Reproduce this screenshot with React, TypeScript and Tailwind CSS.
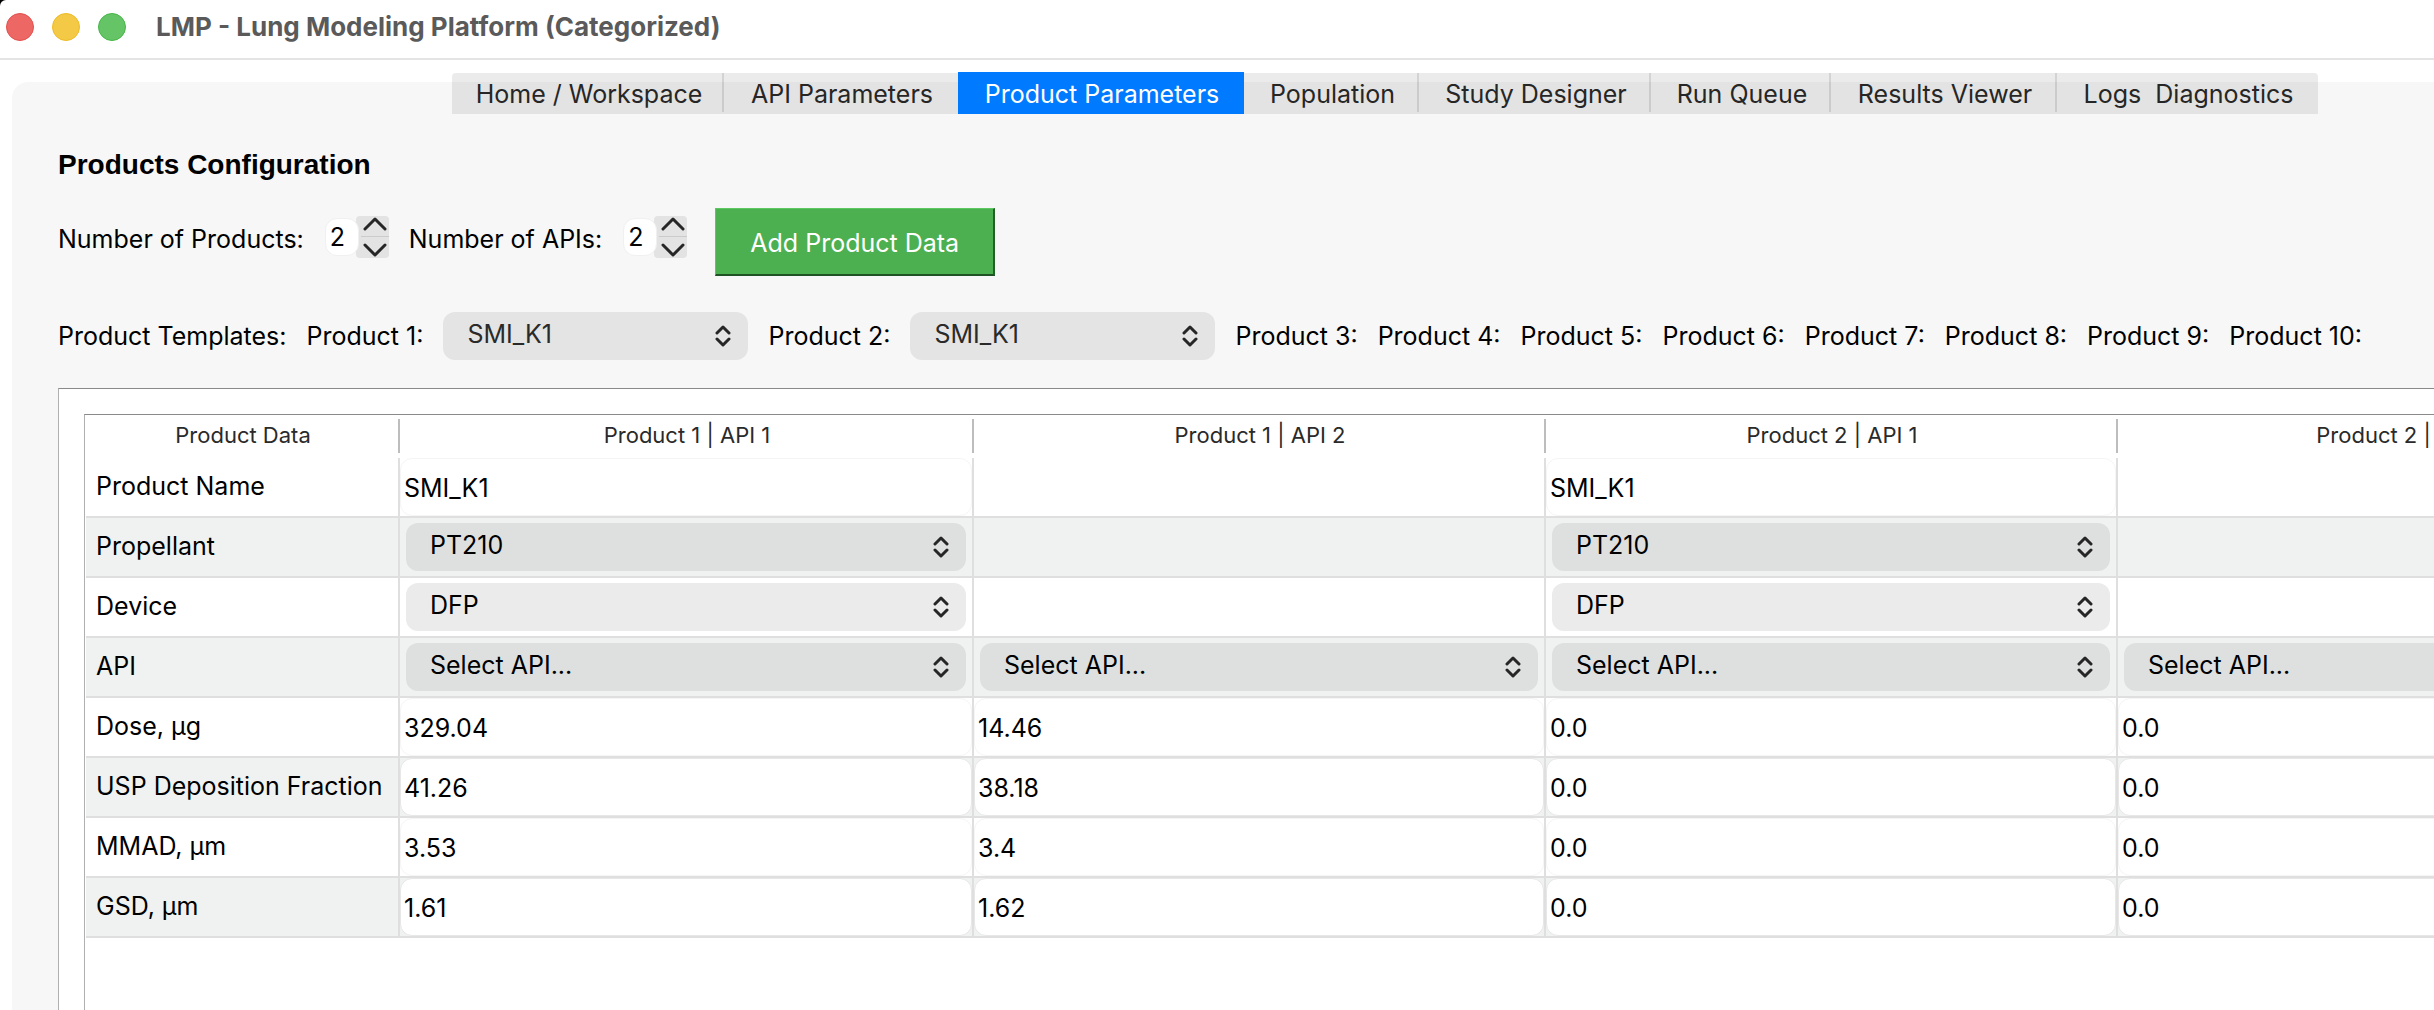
import { useState } from 'react';
import clsx from 'clsx';

const tabs = [
  { label: 'Home / Workspace', width: 'w-[272px]', divider: true },
  { label: 'API Parameters', width: 'w-[234px]', divider: false },
  { label: 'Product Parameters', width: 'w-[286px]', divider: false },
  { label: 'Population', width: 'w-[175px]', divider: true },
  { label: 'Study Designer', width: 'w-[232px]', divider: true },
  { label: 'Run Queue', width: 'w-[180px]', divider: true },
  { label: 'Results Viewer', width: 'w-[226px]', divider: true },
  { label: 'Logs  Diagnostics', width: 'w-[261px]', divider: false },
];

const columns = ['Product 1 | API 1', 'Product 1 | API 2', 'Product 2 | API 1', 'Product 2 | API 2'];

type Row = { label: string; kind: 'text' | 'select'; values: (string | null)[] };

const rows: Row[] = [
  { label: 'Product Name', kind: 'text', values: ['SMI_K1', null, 'SMI_K1', null] },
  { label: 'Propellant', kind: 'select', values: ['PT210', null, 'PT210', null] },
  { label: 'Device', kind: 'select', values: ['DFP', null, 'DFP', null] },
  { label: 'API', kind: 'select', values: ['Select API...', 'Select API...', 'Select API...', 'Select API...'] },
  { label: 'Dose, µg', kind: 'text', values: ['329.04', '14.46', '0.0', '0.0'] },
  { label: 'USP Deposition Fraction', kind: 'text', values: ['41.26', '38.18', '0.0', '0.0'] },
  { label: 'MMAD, µm', kind: 'text', values: ['3.53', '3.4', '0.0', '0.0'] },
  { label: 'GSD, µm', kind: 'text', values: ['1.61', '1.62', '0.0', '0.0'] },
];

const emptyTemplates = [3, 4, 5, 6, 7, 8, 9, 10];

function Picker({ id, label, value, className }: { id?: string; label?: string; value: string; className: string }) {
  return (
    <div className="relative">
      <select
        id={id}
        aria-label={label}
        defaultValue={value}
        className={clsx('block h-12 w-full appearance-none rounded-xl pr-12 pb-1 pl-6 outline-none', className)}
      >
        <option>{value}</option>
      </select>
      <svg
        viewBox="0 0 16 24"
        className="pointer-events-none absolute top-3 right-[17px] h-6 w-4 fill-none stroke-[#262626] stroke-3"
        strokeLinecap="round"
        strokeLinejoin="round"
      >
        <path d="M2 9l6-6 6 6M2 15l6 6 6-6" />
      </svg>
    </div>
  );
}

function Spinner({ id, label }: { id: string; label: string }) {
  const [value, setValue] = useState(2);
  const step = (by: number) => setValue((v) => Math.min(10, Math.max(1, v + by)));
  return (
    <div className="flex items-center">
      <label htmlFor={id} className="pt-1 pr-[21px]">
        {label}
      </label>
      <input
        id={id}
        type="number"
        value={value}
        onChange={(e) => setValue(Number(e.target.value))}
        className="z-10 h-[38px] w-[34px] appearance-none rounded-xl border border-[#f0f0f0] bg-white pl-1 outline-none [appearance:textfield] [&::-webkit-inner-spin-button]:appearance-none"
      />
      <div className="-ml-[3px] flex h-[42px] w-[33px] flex-col rounded-sm bg-[#e3e3e3] pl-[5px]">
        <button type="button" aria-label={`Increase ${label}`} onClick={() => step(1)} className="flex h-[21px] items-start justify-center border-b border-[#cbcbcb]">
          <svg viewBox="0 0 24 16" className="h-4 w-6 fill-none stroke-[#262626] stroke-3" strokeLinecap="round" strokeLinejoin="round">
            <path d="M2 13L12 3l10 10" />
          </svg>
        </button>
        <button type="button" aria-label={`Decrease ${label}`} onClick={() => step(-1)} className="flex h-[21px] items-end justify-center">
          <svg viewBox="0 0 24 16" className="h-4 w-6 fill-none stroke-[#262626] stroke-3" strokeLinecap="round" strokeLinejoin="round">
            <path d="M2 3l10 10L22 3" />
          </svg>
        </button>
      </div>
    </div>
  );
}

function TitleBar() {
  return (
    <header className="flex h-[60px] shrink-0 items-center gap-[18px] rounded-tl-md border-b-2 border-[#e4e4e4] bg-white pb-1 pl-1.5">
      <button type="button" aria-label="Close" className="size-7 rounded-full border border-[#e2504e] bg-[#ed6765]" />
      <button type="button" aria-label="Minimize" className="size-7 rounded-full border border-[#eebb25] bg-[#f3c945]" />
      <button type="button" aria-label="Zoom" className="size-7 rounded-full border border-[#47b748] bg-[#64c466]" />
      <h1 className="pl-3 text-[26px] leading-8 font-bold text-[#5a5a5a]">LMP - Lung Modeling Platform (Categorized)</h1>
    </header>
  );
}

function DataTable() {
  return (
    <table className="w-[2604px] table-fixed border-separate border-spacing-0">
      <colgroup>
        <col className="w-[314px]" />
        <col className="w-[574px]" />
        <col />
        <col />
        <col />
      </colgroup>
      <thead>
        <tr className="h-[43px] text-[22px] leading-7 text-[#2a2a2a]">
          {['Product Data', ...columns].map((name) => (
            <th key={name} scope="col" className="relative p-0 pb-[3px] font-normal">
              {name}
              <span className="absolute top-1 right-0 h-[34px] w-0.5 bg-[#bdbdbd]" />
            </th>
          ))}
        </tr>
      </thead>
      <tbody>
        {rows.map((row, i) => {
          const striped = i % 2 === 1;
          return (
            <tr key={row.label} className={striped ? 'bg-[#f0f2f1]' : 'bg-white'}>
              <th scope="row" className="h-[60px] border-r-2 border-b-2 border-[#dedfde] p-0 pb-0.5 pl-[10px] text-left font-normal whitespace-nowrap">
                {row.label}
              </th>
              {row.values.map((value, c) => (
                <td key={columns[c]} className="h-[60px] border-r-2 border-b-2 border-[#dedfde] p-0">
                  {value !== null && row.kind === 'text' && (
                    <input
                      type="text"
                      aria-label={`${row.label}, ${columns[c]}`}
                      defaultValue={value}
                      className={clsx(
                        'block h-[58px] w-full rounded-xl border bg-white pt-0.5 pl-[3px] outline-none',
                        striped ? 'border-[#e6e7e6]' : 'border-[#f5f5f5]',
                      )}
                    />
                  )}
                  {value !== null && row.kind === 'select' && (
                    <div className="px-1.5">
                      <Picker label={`${row.label}, ${columns[c]}`} value={value} className={striped ? 'bg-[#dee0df]' : 'bg-[#ebebeb]'} />
                    </div>
                  )}
                </td>
              ))}
            </tr>
          );
        })}
      </tbody>
    </table>
  );
}

export default function App() {
  const [active, setActive] = useState('Product Parameters');
  return (
    <div className="flex h-screen flex-col overflow-hidden bg-black font-[Inter,sans-serif] text-[25px] leading-8 text-black">
      <TitleBar />
      <div className="flex min-h-0 grow flex-col bg-white pt-[22px] pl-3">
        <main className="flex min-h-0 grow flex-col rounded-tl-2xl bg-[#f7f7f7] pl-[46px]">
          <nav role="tablist" className="-mt-[9px] ml-[394px] flex h-[41px] w-max shrink-0 items-start rounded-t-sm bg-black/8">
            {tabs.map((tab) => (
              <button
                key={tab.label}
                type="button"
                role="tab"
                aria-selected={tab.label === active}
                onClick={() => setActive(tab.label)}
                className={clsx(
                  'relative pl-0.5 whitespace-pre',
                  tab.width,
                  tab.label === active ? '-mt-px h-[42px] bg-[#007aff] pt-0.5 text-white' : 'h-[41px] text-[#262626]',
                )}
              >
                {tab.label}
                {tab.divider && <span className="absolute top-0 right-0 h-[39px] w-0.5 bg-black/10" />}
              </button>
            ))}
          </nav>

          <h2 className="mt-[35px] font-['Liberation_Sans',sans-serif] text-[28px] leading-8 font-bold">Products Configuration</h2>

          <div className="mt-[27px] flex h-[68px] shrink-0 items-center">
            <div className="flex gap-5 pb-[10px]">
              <Spinner id="product-count" label="Number of Products:" />
              <Spinner id="api-count" label="Number of APIs:" />
            </div>
            <button
              type="button"
              className="ml-7 h-[68px] w-[280px] border-t border-r-2 border-b-2 border-l border-t-[#5cc860] border-r-[#23602a] border-b-[#1f5224] border-l-[#5cc860] bg-[#4caf50] pt-0.5 text-white"
            >
              Add Product Data
            </button>
          </div>

          <div className="mt-9 flex shrink-0 items-center gap-5 whitespace-nowrap">
            <span>Product Templates:</span>
            {[1, 2].map((n) => (
              <div key={n} className="flex items-center gap-5">
                <label htmlFor={`template-${n}`}>Product {n}:</label>
                <div className="w-[305px]">
                  <Picker id={`template-${n}`} value="SMI_K1" className="bg-[#e4e4e4] text-[#2a2a2a]" />
                </div>
              </div>
            ))}
            {emptyTemplates.map((n) => (
              <span key={n}>Product {n}:</span>
            ))}
          </div>

          <section className="mt-7 flex min-h-0 grow overflow-hidden border-t border-l border-t-[#8a8a8a] border-l-[#b0b0b0] bg-white pt-[25px] pl-[25px]">
            <div className="min-w-0 grow overflow-hidden border-t border-l border-t-[#8a8a8a] border-l-[#b0b0b0] pl-px">
              <DataTable />
            </div>
          </section>
        </main>
      </div>
    </div>
  );
}
